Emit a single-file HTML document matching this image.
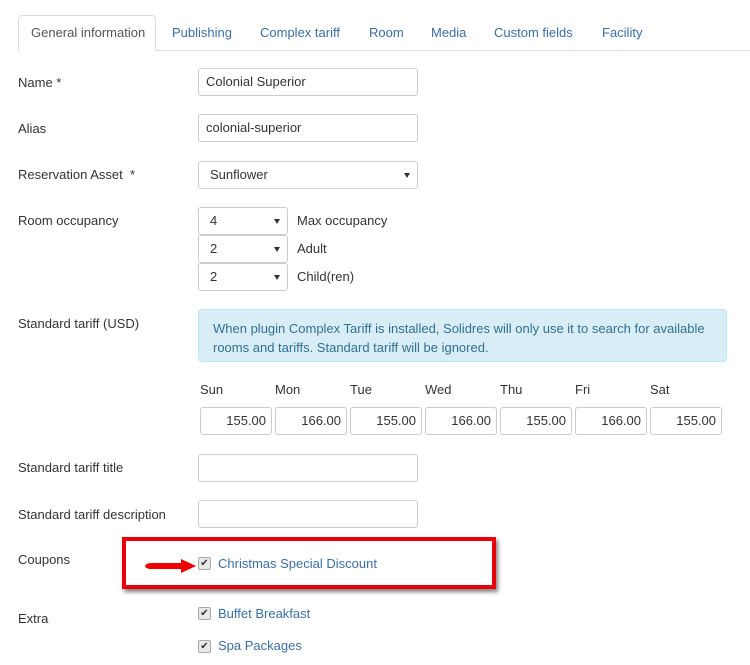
<!DOCTYPE html><html><head><style>
body{margin:0;width:750px;height:665px;background:#fff;font-family:"Liberation Sans",sans-serif;font-size:13px;color:#333;position:relative;overflow:hidden}
.a{position:absolute}
.tab{position:absolute;top:25px;color:#3a6ea5;font-size:13px}
.in{position:absolute;border:1px solid #ccc;border-radius:3px;box-sizing:border-box;background:#fff;padding-left:7px;line-height:26px;height:28px}
.sel:after{content:"";position:absolute;right:7px;top:11px;border-left:3px solid transparent;border-right:3px solid transparent;border-top:5px solid #333}
.lab{position:absolute;left:18px}
.num{text-align:right;padding-right:5px;width:72px;left:0}
.cb{position:absolute;left:198px;width:11px;height:11px;border:1px solid #aaa;border-radius:2px;background:#e8e8e8;font-size:10px;line-height:11px;text-align:center;color:#333}
.lk{position:absolute;left:218px;color:#3a6ea5}
</style></head><body>
<div class="a" style="left:18px;top:50px;width:737px;border-top:1px solid #ddd"></div>
<div class="a" style="left:18px;top:15px;width:138px;height:36px;border:1px solid #ddd;border-bottom:none;border-radius:4px 4px 0 0;background:#fff;box-sizing:border-box"></div>
<div class="tab" style="left:31px;color:#555">General information</div>
<div class="tab" style="left:172px">Publishing</div>
<div class="tab" style="left:260px">Complex tariff</div>
<div class="tab" style="left:369px">Room</div>
<div class="tab" style="left:431px">Media</div>
<div class="tab" style="left:494px">Custom fields</div>
<div class="tab" style="left:602px">Facility</div>

<div class="lab" style="top:75px">Name *</div>
<div class="in" style="left:198px;top:68px;width:220px">Colonial Superior</div>
<div class="lab" style="top:121px">Alias</div>
<div class="in" style="left:198px;top:114px;width:220px">colonial-superior</div>
<div class="lab" style="top:167px">Reservation Asset &nbsp;*</div>
<div class="in sel" style="left:198px;top:161px;width:220px;padding-left:11px">Sunflower</div>
<div class="lab" style="top:213px">Room occupancy</div>
<div class="in sel" style="left:198px;top:207px;width:90px;padding-left:11px">4</div>
<div class="in sel" style="left:198px;top:235px;width:90px;padding-left:11px">2</div>
<div class="in sel" style="left:198px;top:263px;width:90px;padding-left:11px">2</div>
<div class="a" style="left:297px;top:213px">Max occupancy</div>
<div class="a" style="left:297px;top:241px">Adult</div>
<div class="a" style="left:297px;top:269px">Child(ren)</div>

<div class="lab" style="top:316px">Standard tariff (USD)</div>
<div class="a" style="left:198px;top:309px;width:529px;height:53px;box-sizing:border-box;background:#d9edf7;border:1px solid #bce8f1;border-radius:4px;color:#31708f;padding:9px 14px;line-height:19px">When plugin Complex Tariff is installed, Solidres will only use it to search for available rooms and tariffs. Standard tariff will be ignored.</div>
<div class="a" style="left:200px;top:382px">Sun</div>
<div class="a" style="left:275px;top:382px">Mon</div>
<div class="a" style="left:350px;top:382px">Tue</div>
<div class="a" style="left:425px;top:382px">Wed</div>
<div class="a" style="left:500px;top:382px">Thu</div>
<div class="a" style="left:575px;top:382px">Fri</div>
<div class="a" style="left:650px;top:382px">Sat</div>
<div class="in num" style="left:200px;top:407px">155.00</div>
<div class="in num" style="left:275px;top:407px">166.00</div>
<div class="in num" style="left:350px;top:407px">155.00</div>
<div class="in num" style="left:425px;top:407px">166.00</div>
<div class="in num" style="left:500px;top:407px">155.00</div>
<div class="in num" style="left:575px;top:407px">166.00</div>
<div class="in num" style="left:650px;top:407px">155.00</div>

<div class="lab" style="top:460px">Standard tariff title</div>
<div class="in" style="left:198px;top:454px;width:220px"></div>
<div class="lab" style="top:507px">Standard tariff description</div>
<div class="in" style="left:198px;top:500px;width:220px"></div>

<div class="lab" style="top:552px">Coupons</div>
<div class="a" style="left:122px;top:537px;width:374px;height:52px;box-sizing:border-box;border:4px solid #e8000b;box-shadow:2px 3px 4px rgba(0,0,0,.5)"></div>
<svg class="a" style="left:143px;top:558px" width="55" height="16"><path d="M2 8 Q3 5 8 5 L38 5 L38 1 L53 8 L38 15 L38 11 L8 11 Q3 11 2 8Z" fill="#e00"/></svg>
<div class="cb" style="top:557px">✔</div>
<div class="lk" style="top:556px">Christmas Special Discount</div>
<div class="lab" style="top:611px">Extra</div>
<div class="cb" style="top:607px">✔</div>
<div class="lk" style="top:606px">Buffet Breakfast</div>
<div class="cb" style="top:640px">✔</div>
<div class="lk" style="top:638px">Spa Packages</div>
</body></html>
